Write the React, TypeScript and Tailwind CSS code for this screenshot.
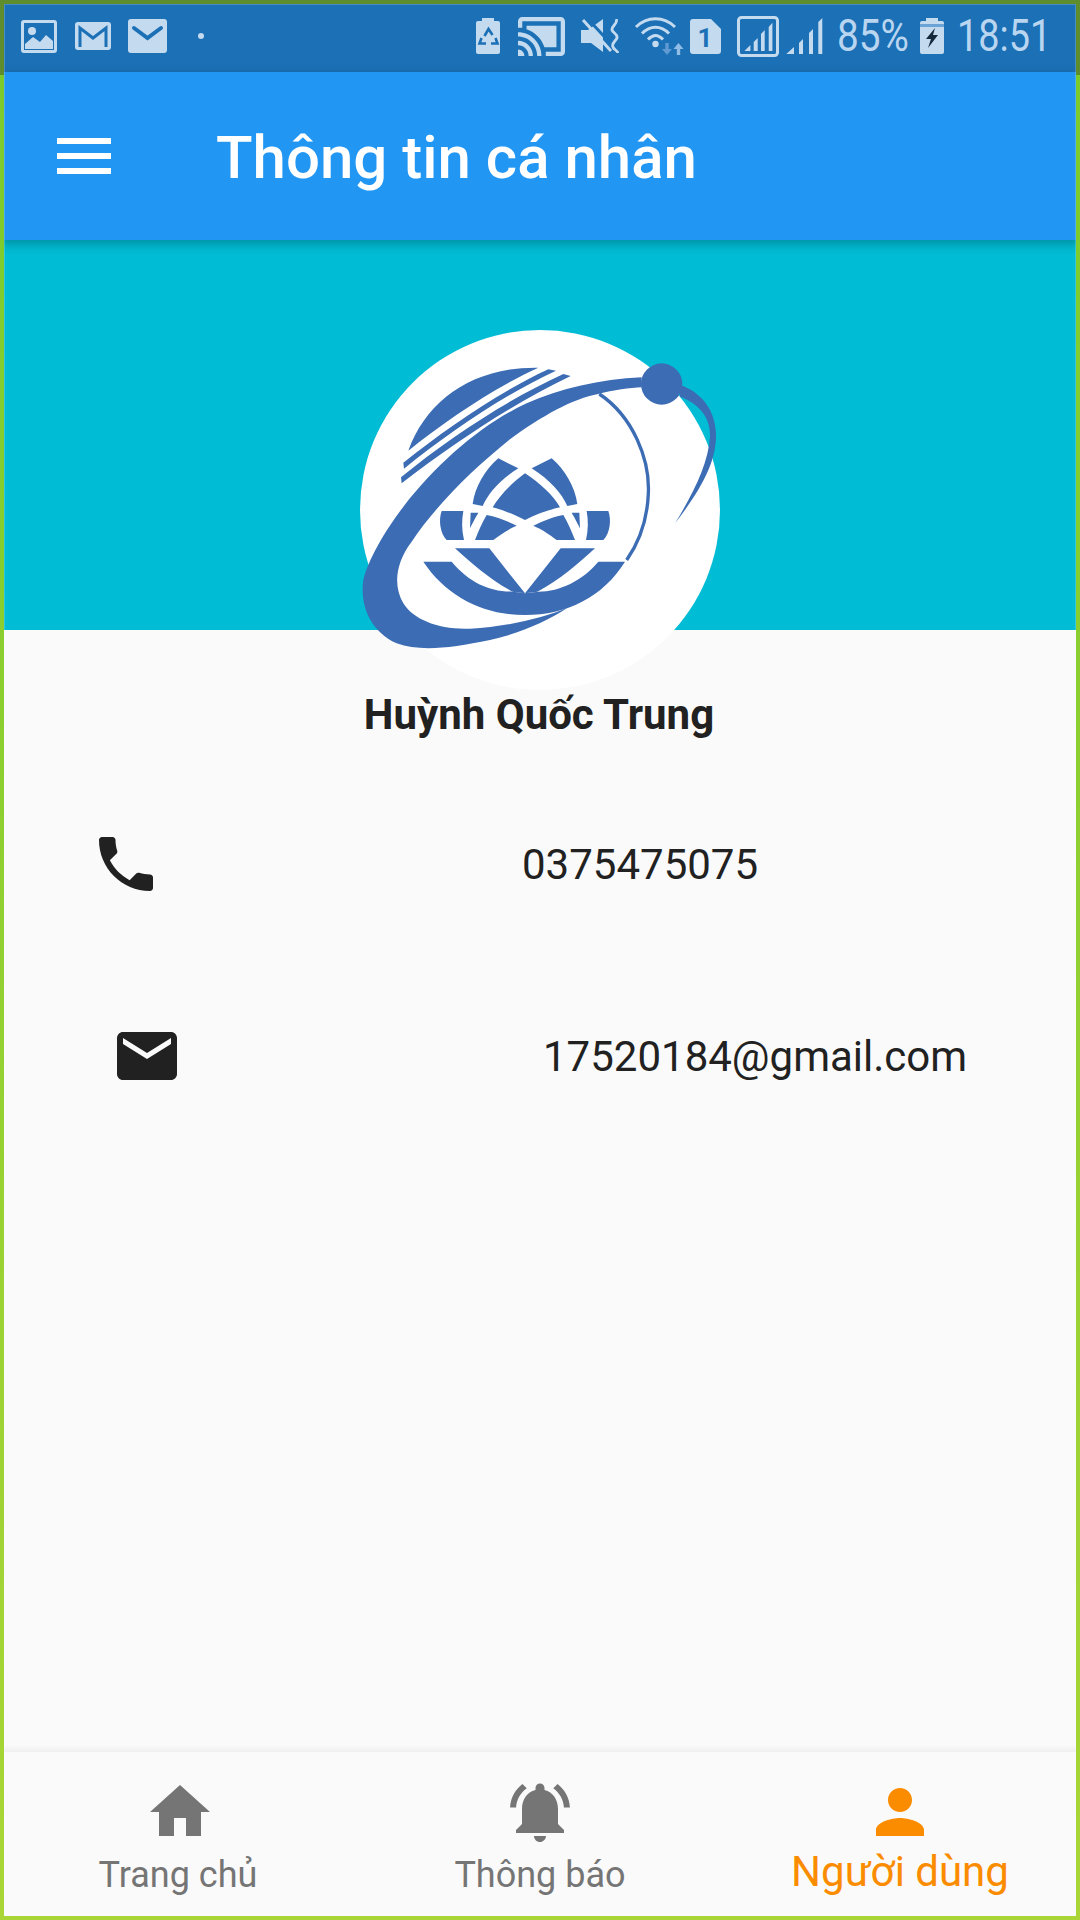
const statusColor = '#c4daef';
const barColor = '#1b70b6';
const logoColor = '#3b6cb4';

const Logo = () => (
  <svg width="400" height="380" viewBox="0 0 1200 1140" className="block overflow-visible">
    <circle cx="600" cy="570" r="540" fill="#ffffff" />
    <g fill={logoColor}>
      {/* planet cap and stripes */}
      <path d="M205,392 C260,240 400,140 595,143 C460,205 320,300 205,392Z" />
      <path d="M190,428 C320,325 470,220 625,148 L648,152 C490,225 330,335 192,446Z" />
      <path d="M183,472 C330,350 510,235 670,162 L692,168 C520,250 340,370 185,490Z" />
      {/* orbit */}
      <path d="M905,172 C780,178 660,205 560,250 C430,310 300,420 190,560 C130,640 85,720 70,780 C60,850 85,930 170,970 C240,995 330,985 450,960 C540,940 620,905 685,862 C610,895 500,920 390,926 C300,930 220,900 190,850 C160,800 165,730 215,665 C285,560 395,450 510,358 C605,288 700,235 775,222 C820,210 870,204 905,202Z" />
      <circle cx="965" cy="192" r="62" />
      {/* tail */}
      <path d="M1020,195 C1080,215 1125,265 1128,340 C1130,420 1090,500 1005,610 C1060,520 1105,430 1110,350 C1112,290 1075,250 1020,230Z" />
      {/* lotus */}
      <path d="M555,460 C600,490 640,525 660,562 C620,570 585,585 555,600 C525,585 490,570 458,562 C480,525 515,490 555,460Z" />
      <path d="M475,415 L535,445 C480,480 445,520 428,558 L398,552 C405,500 435,450 475,415Z" />
      <path d="M635,415 L575,445 C630,480 665,520 682,558 L712,552 C705,500 675,450 635,415Z" />
      <path d="M305,573 L370,573 C365,600 365,630 372,660 L320,660 C300,640 295,600 305,573Z" />
      <path d="M805,573 L740,573 C745,600 745,630 738,660 L790,660 C810,640 815,600 805,573Z" />
      <path d="M392,578 L415,578 C405,595 395,615 390,625Z" />
      <path d="M718,578 L695,578 C705,595 715,615 720,625Z" />
      <path d="M440,585 C470,590 505,605 530,617 C500,630 480,645 460,660 L405,660 C415,635 425,610 440,585Z" />
      <path d="M670,585 C640,590 605,605 580,617 C610,630 630,645 650,660 L705,660 C695,635 685,610 670,585Z" />
      <path d="M345,685 L448,685 L555,820 L518,815 C450,780 395,730 345,685Z" />
      <path d="M765,685 L662,685 L555,820 L592,815 C660,780 715,730 765,685Z" />
      <path d="M250,725 L335,725 C390,790 450,815 520,815 L555,820 L595,815 C660,815 730,780 775,725 L855,725 C790,830 680,885 555,885 C430,885 320,830 250,725Z" />
    </g>
    <path d="M778,222 C880,290 930,420 925,520 C922,600 895,670 860,720" fill="none" stroke={logoColor} strokeWidth="10" />
  </svg>
);

const StatusBar = () => (
  <div className="h-[72px] flex items-center justify-between pl-[21px] pr-[30px] bg-[#1b70b6] text-[#b9d5ef] font-['Roboto',sans-serif] text-[44px]">
    <div className="flex items-center">
      <svg width="36" height="33" viewBox="0 0 36 33">
        <rect width="36" height="33" rx="3" fill={statusColor} />
        <rect x="3" y="3" width="30" height="27" fill={barColor} />
        <circle cx="11" cy="11" r="4" fill={statusColor} />
        <path d="M4 29 V24 L12 17 L19 22 L25 15 L32 21 V29Z" fill={statusColor} />
      </svg>
      <svg width="36" height="28" viewBox="0 0 36 28" className="ml-[18px]">
        <rect width="36" height="28" rx="3" fill={statusColor} />
        <path d="M5 25 V6 L18 16 L31 6 V25" fill="none" stroke={barColor} strokeWidth="3" />
      </svg>
      <svg width="39" height="34" viewBox="0 0 39 34" className="ml-[17px]">
        <rect width="39" height="34" rx="3" fill={statusColor} />
        <path d="M6 9 L19.5 19 L33 9" fill="none" stroke={barColor} strokeWidth="4" strokeLinecap="round" />
      </svg>
      <div className="ml-[31px] w-[6px] h-[6px] rounded-full bg-[#c4daef]" />
    </div>
    <div className="flex items-center">
      <svg width="24" height="36" viewBox="0 0 24 36">
        <path d="M6 0 H18 V3 H22 a2 2 0 0 1 2 2 V34 a2 2 0 0 1 -2 2 H2 a2 2 0 0 1 -2 -2 V5 a2 2 0 0 1 2 -2 H6Z" fill={statusColor} />
        <path d="M8.5 18 L12.5 11 L16.5 17 M19.5 20 L21.5 25.5 H15 M5.5 20 L3.5 25.5 H10" fill="none" stroke={barColor} strokeWidth="2.6" />
      </svg>
      <svg width="47" height="39" viewBox="1 3 22 18" preserveAspectRatio="none" className="ml-[18px]">
        <path fill={statusColor} d="M1 18v3h3c0-1.66-1.34-3-3-3zm0-4v2c2.76 0 5 2.24 5 5h2c0-3.87-3.13-7-7-7zm18-7H5v1.63c3.96 1.28 7.09 4.41 8.37 8.37H19V7zM1 10v2c4.97 0 9 4.03 9 9h2c0-6.08-4.93-11-11-11zm20-7H3c-1.1 0-2 .9-2 2v3h2V5h18v14h-7v2h7c1.1 0 2-.9 2-2V5c0-1.1-.9-2-2-2z" />
      </svg>
      <svg width="38" height="34" viewBox="0 0 38 34" className="ml-[16px]">
        <path d="M0 11 H7 L22 0 V33 L10 24 H0Z" fill={statusColor} />
        <path d="M6 -1 L32 27" stroke={barColor} strokeWidth="3" />
        <path d="M2 1 L30 32" stroke={statusColor} strokeWidth="3" />
        <path d="M35 0 C38 4 30 7 31 11 C32 14 37 15 36 19 C35 22 30 24 32 28 C33 31 36 31 37 34" fill="none" stroke={statusColor} strokeWidth="2.8" />
      </svg>
      <svg width="48" height="36" viewBox="0 0 48 36" className="ml-[16px] overflow-visible">
        <path d="M1 9 C12 -2 29 -2 40 9 M7 15.5 C15 7 26 7 34 15.5 M13 21.5 C18 16 23 16 28 21.5" fill="none" stroke={statusColor} strokeWidth="3" />
        <circle cx="20.5" cy="26" r="3.2" fill={statusColor} />
        <path d="M32 25 V32" stroke="#5f9bd2" strokeWidth="3.4" />
        <path d="M27 31 H37 L32 37Z" fill="#5f9bd2" />
        <path d="M43.5 37 V30" stroke="#8fbde6" strokeWidth="3.4" />
        <path d="M38.5 31 H48.5 L43.5 25Z" fill="#8fbde6" />
      </svg>
      <svg width="31" height="35" viewBox="0 0 31 35" className="ml-[7px]">
        <path d="M3 0 H21 L31 10 V32 a3 3 0 0 1 -3 3 H3 a3 3 0 0 1 -3 -3 V3 a3 3 0 0 1 3 -3Z" fill={statusColor} />
        <text x="15" y="28" textAnchor="middle" fontSize="26" fontWeight="700" fontFamily="Roboto, sans-serif" fill={barColor}>1</text>
      </svg>
      <svg width="42" height="41" viewBox="0 0 42 41" className="ml-[16px]">
        <rect x="1.5" y="1.5" width="39" height="38" rx="3" fill="none" stroke={statusColor} strokeWidth="3" />
        <path d="M7.4 35 L13.4 29 V35Z M16.7 26 L20.7 22 V35 H16.7Z M24 18 L27.7 14 V35 H24Z M31.7 11 L35.4 6.7 V35 H31.7Z" fill={statusColor} />
      </svg>
      <svg width="37" height="36" viewBox="0 0 37 36" className="ml-[7px]">
        <path d="M0.3 36 L8 29 V36Z M13 25 L17 21 V36 H13Z M23 15 L27 11 V36 H23Z M32.3 4 L36.3 0 V36 H32.3Z" fill={statusColor} />
      </svg>
      <span className="ml-[14px] w-[70px] inline-block origin-left scale-x-[0.88] whitespace-nowrap">85%</span>
      <svg width="24" height="36" viewBox="0 0 24 36" className="ml-[13px]">
        <path d="M6 0 H18 V3 H22 a2 2 0 0 1 2 2 V34 a2 2 0 0 1 -2 2 H2 a2 2 0 0 1 -2 -2 V5 a2 2 0 0 1 2 -2 H6Z" fill={statusColor} />
        <rect x="0" y="6" width="24" height="3" fill="#6ba3d6" />
        <path d="M15 10 L6 21 H11 L8 30 L18 17 H13Z" fill="#14283c" />
      </svg>
      <span className="ml-[13px] w-[93px] inline-block origin-left scale-x-[0.86] whitespace-nowrap">18:51</span>
    </div>
  </div>
);

const App = () => {
  return (
    <div className="relative w-[1080px] h-[1920px] flex flex-col overflow-hidden bg-[#fafafa] font-['Roboto',sans-serif]">
      <StatusBar />

      {/* App bar */}
      <header className="relative z-10 h-[168px] flex items-center pl-[48px] bg-[#2196f3] shadow-[0_4px_10px_rgba(0,0,0,0.25)]">
        <svg width="72" height="72" viewBox="0 0 24 24" fill="#ffffff">
          <path d="M3 18h18v-2H3v2zm0-5h18v-2H3v2zm0-7v2h18V6H3z" />
        </svg>
        <h1 className="ml-[96px] pt-[4px] text-[60px] font-medium text-white leading-none whitespace-nowrap">Thông tin cá nhân</h1>
      </header>

      {/* Banner with logo */}
      <div className="h-[390px] pt-[80px] flex justify-center bg-[#00bcd4]">
        <div className="relative z-10 h-[380px]">
          <Logo />
        </div>
      </div>

      <main className="flex-1 flex flex-col text-[#212121]">
        <p className="mt-[60px] pr-[2px] text-center text-[42px] leading-[49px] font-bold whitespace-nowrap">Huỳnh Quốc Trung</p>

        <div className="mt-[89px] flex items-center pl-[90px]">
          <svg width="72" height="72" viewBox="0 0 24 24" fill="#212121">
            <path d="M6.62 10.79c1.44 2.83 3.76 5.14 6.59 6.59l2.2-2.2c.27-.27.67-.36 1.02-.24 1.12.37 2.33.57 3.57.57.55 0 1 .45 1 1V20c0 .55-.45 1-1 1-9.39 0-17-7.61-17-17 0-.55.45-1 1-1h3.5c.55 0 1 .45 1 1 0 1.25.2 2.45.57 3.57.11.35.03.74-.25 1.02l-2.2 2.2z" />
          </svg>
          <span className="ml-[360px] pt-[2px] text-[42px] leading-none">0375475075</span>
        </div>

        <div className="mt-[120px] flex items-center pl-[111px]">
          <svg width="72" height="72" viewBox="0 0 24 24" fill="#212121">
            <path d="M20 4H4c-1.1 0-1.99.9-1.99 2L2 18c0 1.1.9 2 2 2h16c1.1 0 2-.9 2-2V6c0-1.1-.9-2-2-2zm0 4l-8 5-8-5V6l8 5 8-5v2z" />
          </svg>
          <span className="ml-[360px] pt-[2px] text-[42px] leading-none">17520184@gmail.com</span>
        </div>
      </main>

      {/* Bottom navigation */}
      <nav className="relative h-[168px] grid grid-cols-3 pt-[24px] bg-[#fafafa] shadow-[0_-3px_6px_rgba(0,0,0,0.05)]">
        <div className="flex flex-col items-center text-[#757575]">
          <svg width="72" height="72" viewBox="0 0 24 24" fill="#757575">
            <path d="M10 20v-6h4v6h5v-8h3L12 3 2 12h3v8z" />
          </svg>
          <span className="-ml-[4px] text-[36px] leading-[54px] whitespace-nowrap">Trang chủ</span>
        </div>
        <div className="flex flex-col items-center text-[#757575]">
          <svg width="72" height="72" viewBox="0 0 24 24" fill="#757575">
            <path d="M7.58 4.08L6.15 2.65C3.75 4.48 2.17 7.3 2.03 10.5h2c.15-2.65 1.51-4.97 3.55-6.42zm12.39 6.42h2c-.15-3.2-1.73-6.02-4.12-7.85l-1.42 1.43c2.02 1.45 3.39 3.77 3.54 6.42zM18 11c0-3.07-1.64-5.64-4.5-6.32V4c0-.83-.67-1.5-1.5-1.5s-1.5.67-1.5 1.5v.68C7.63 5.36 6 7.92 6 11v5l-2 2v1h16v-1l-2-2v-5zm-6 11c.14 0 .27-.01.4-.04.65-.14 1.18-.58 1.44-1.18.1-.24.15-.5.15-.78h-4c.01 1.1.9 2 2.01 2z" />
          </svg>
          <span className="text-[36px] leading-[54px] whitespace-nowrap">Thông báo</span>
        </div>
        <div className="flex flex-col items-center text-[#fb8c00]">
          <svg width="72" height="72" viewBox="0 0 24 24" fill="#fb8c00">
            <path d="M12 12c2.21 0 4-1.79 4-4s-1.79-4-4-4-4 1.79-4 4 1.79 4 4 4zm0 2c-2.67 0-8 1.34-8 4v2h16v-2c0-2.66-5.33-4-8-4z" />
          </svg>
          <span className="text-[42px] leading-[48px] whitespace-nowrap">Người dùng</span>
        </div>
      </nav>

      {/* Screenshot frame lying over everything */}
      <div className="absolute inset-0 z-20 pointer-events-none border-4 shadow-[inset_0_0_0_1px_rgba(255,255,255,0.2)] [border-image:linear-gradient(to_bottom,#5f8c2c_0,#5f8c2c_72px,#7ccb2c_72px,#a9d636_100%)_1]" />
    </div>
  );
};

export default App;
